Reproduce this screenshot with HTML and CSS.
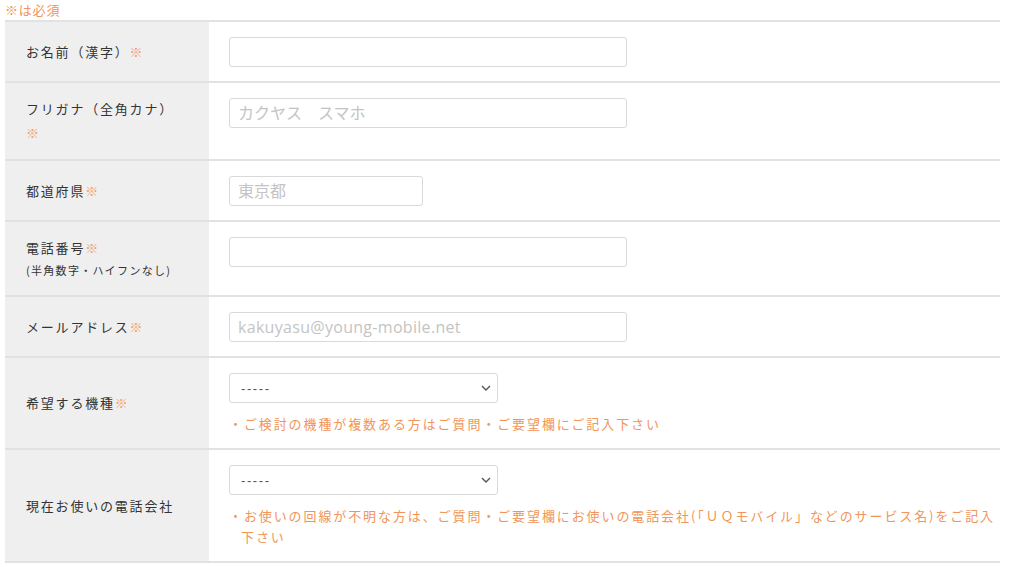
FILE: index.html
```html
<!DOCTYPE html>
<html lang="ja">
<head>
<meta charset="utf-8">
<title>お問い合わせフォーム</title>
<link rel="stylesheet" href="styles.css">
</head>
<body>
<div class="page">
  <p class="required-note">※は必須</p>
  <div class="form-table">
    <div class="row">
      <div class="label"><span class="line">お名前（漢字）<span class="req">※</span></span></div>
      <div class="field"><input class="text wide" type="text"></div>
    </div>
    <div class="row">
      <div class="label"><span class="line">フリガナ（全角カナ）</span><span class="line req">※</span></div>
      <div class="field"><input class="text wide" type="text" placeholder="カクヤス　スマホ"></div>
    </div>
    <div class="row">
      <div class="label"><span class="line">都道府県<span class="req">※</span></span></div>
      <div class="field"><input class="text short" type="text" placeholder="東京都"></div>
    </div>
    <div class="row">
      <div class="label"><span class="line">電話番号<span class="req">※</span></span><span class="line sub">(半角数字・ハイフンなし)</span></div>
      <div class="field"><input class="text wide" type="tel"></div>
    </div>
    <div class="row">
      <div class="label"><span class="line">メールアドレス<span class="req">※</span></span></div>
      <div class="field"><input class="text wide latin" type="email" placeholder="kakuyasu@young-mobile.net"></div>
    </div>
    <div class="row">
      <div class="label"><span class="line">希望する機種<span class="req">※</span></span></div>
      <div class="field">
        <div class="select-wrap">
          <select class="select"><option>-----</option></select>
          <svg class="chev" width="10" height="6" viewBox="0 0 10 6"><path d="M1 1 L5 5 L9 1" fill="none" stroke="#555" stroke-width="1.4"/></svg>
        </div>
        <p class="note">・ご検討の機種が複数ある方はご質問・ご要望欄にご記入下さい</p>
      </div>
    </div>
    <div class="row last">
      <div class="label"><span class="line">現在お使いの電話会社</span></div>
      <div class="field">
        <div class="select-wrap">
          <select class="select"><option>-----</option></select>
          <svg class="chev" width="10" height="6" viewBox="0 0 10 6"><path d="M1 1 L5 5 L9 1" fill="none" stroke="#555" stroke-width="1.4"/></svg>
        </div>
        <p class="note">・お使いの回線が不明な方は、ご質問・ご要望欄にお使いの電話会社(「ＵＱモバイル」などのサービス名)をご記入<br>下さい</p>
      </div>
    </div>
  </div>
</div>
</body>
</html>
```
FILE: styles.css
```css
* { box-sizing: border-box; }
html, body { margin: 0; padding: 0; background: #fff; }
body {
  font-family: "Noto Sans CJK JP", "Liberation Sans", sans-serif;
  color: #333;
  font-size: 13px;
  letter-spacing: 1.8px;
}
.page {
  width: 1000px;
  padding-left: 5px;
}
.required-note {
  margin: 0;
  height: 20px;
  line-height: 20px;
  color: #f1955a;
  letter-spacing: 0.8px;
}
.form-table {
  border-top: 2px solid #e2e2e2;
}
.row {
  display: grid;
  grid-template-columns: 204px 1fr;
  border-bottom: 2px solid #e2e2e2;
}
.label {
  background: #efefef;
  padding: 14px 10px 14px 21px;
  display: flex;
  flex-direction: column;
  justify-content: center;
  line-height: 24px;
}
.line { display: block; }
.req { color: #f5a066; }
.sub {
  font-size: 11px;
  line-height: 21px;
  letter-spacing: 1.3px;
}
.field {
  padding: 15px 0 14px 20px;
}
.text {
  display: block;
  height: 30px;
  border: 1px solid #d9d9d9;
  border-radius: 3px;
  padding: 0 8px;
  font-family: "Open Sans", "Noto Sans CJK JP", sans-serif;
  font-size: 16px;
  letter-spacing: 0;
  color: #333;
  background: #fff;
  outline: none;
}
.text.latin { letter-spacing: 0.3px; }
.text::placeholder { color: #c4c4c4; }
.wide { width: 398px; }
.short { width: 194px; }
.select-wrap {
  position: relative;
  width: 269px;
  height: 30px;
}
.select {
  appearance: none;
  -webkit-appearance: none;
  width: 100%;
  height: 30px;
  border: 1px solid #d9d9d9;
  border-radius: 3px;
  background: #fff;
  padding: 0 0 0 11px;
  font-family: "Liberation Sans", "Noto Sans CJK JP", sans-serif;
  font-size: 13px;
  letter-spacing: 1.6px;
  color: #555;
  outline: none;
}
.chev {
  position: absolute;
  right: 7px;
  top: 12px;
}
.note {
  margin: 10px 0 0;
  color: #f1955a;
  line-height: 21px;
  padding-left: 12px;
  text-indent: -12px;
  letter-spacing: 1.9px;
}
```
